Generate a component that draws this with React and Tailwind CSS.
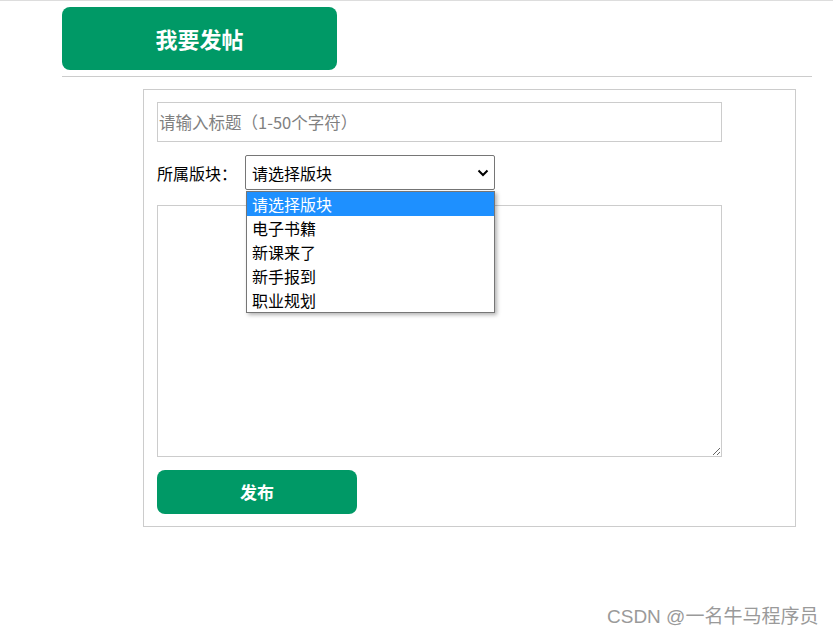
import React from "react";

const font = { fontFamily: '"Noto Sans CJK SC", "Noto Sans", sans-serif' };

export default function App() {
  const items = ["请选择版块", "电子书籍", "新课来了", "新手报到", "职业规划"];
  return (
    <div className="relative w-[833px] h-[636px] bg-white overflow-hidden" style={font}>
      <div className="border-t border-[#dddddd]" />
      <div className="ml-[62px] w-[750px] pt-[6px]">
        <div className="w-[275px] h-[63px] rounded-[8px] bg-[#009966] flex items-center justify-center text-white text-[22px] font-bold">
          我要发帖
        </div>
        <div className="mt-[6px] border-t border-[#cccccc]" />
        <div className="ml-[81px] mt-[12px] w-[653px] border border-[#cccccc] px-[13px] py-[12px]">
          <input
            className="block w-[565px] h-[40px] border border-[#cccccc] px-[1px] text-[16.5px] outline-none placeholder:text-[#808080]"
            placeholder="请输入标题（1-50个字符）"
            style={font}
          />
          <div className="mt-[13px] flex items-center h-[35px]">
            <span className="text-[16px] text-black mr-[8px]">所属版块：</span>
            <div className="relative w-[250px] h-[35px] border border-[#767676] rounded-[2px] flex items-center pl-[6px] pr-[5px] text-[16px] text-black">
              <span className="flex-1">请选择版块</span>
              <svg width="12" height="8" viewBox="0 0 12 8">
                <path d="M1.5 1.5 L6 6 L10.5 1.5" fill="none" stroke="#000" strokeWidth="2" />
              </svg>
              <div className="absolute left-0 top-[35px] w-[249px] border border-[#767676] bg-white shadow-[2px_2px_4px_rgba(0,0,0,0.3)] z-10">
                {items.map((t, i) => (
                  <div
                    key={t}
                    className={
                      i === 0
                        ? "h-[24px] leading-[24px] pl-[5px] text-[16px] bg-[#1e90ff] text-white"
                        : "h-[24px] leading-[24px] pl-[5px] text-[16px] text-black"
                    }
                  >
                    {t}
                  </div>
                ))}
              </div>
            </div>
          </div>
          <textarea
            className="block mt-[15px] w-[565px] h-[252px] border border-[#cccccc] outline-none"
            style={font}
          />
          <div className="mt-[13px] w-[200px] h-[44px] rounded-[8px] bg-[#009966] flex items-center justify-center text-white text-[17px] font-bold">
            发布
          </div>
        </div>
      </div>
      <div className="absolute left-[607px] top-[603px] text-[19px] text-[#9a9a9a] whitespace-nowrap" style={{ fontFamily: '"Liberation Sans", "Noto Sans CJK SC", sans-serif' }}>
        CSDN @一名牛马程序员
      </div>
    </div>
  );
}
